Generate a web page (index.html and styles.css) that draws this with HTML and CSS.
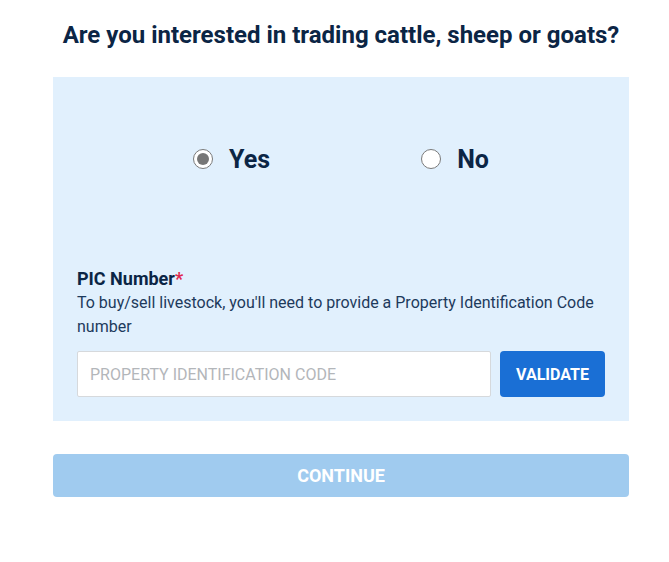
FILE: index.html
```html
<!doctype html>
<html>
<head>
<meta charset="UTF-8">
<title>Livestock trading</title>
<link rel="stylesheet" href="styles.css">
</head>
<body>
  <div class="wrap">
    <h1 class="title">Are you interested in trading cattle, sheep or goats?</h1>
    <div class="panel">
      <div class="choices">
        <label class="choice"><span class="radio checked"></span>Yes</label>
        <label class="choice"><span class="radio"></span>No</label>
      </div>
      <div class="field">
        <div class="field-label">PIC Number<span class="req">*</span></div>
        <p class="field-help">To buy/sell livestock, you'll need to provide a Property Identification Code number</p>
        <div class="field-row">
          <input class="pic-input" type="text" placeholder="PROPERTY IDENTIFICATION CODE">
          <button class="btn-validate">VALIDATE</button>
        </div>
      </div>
    </div>
    <button class="btn-continue">CONTINUE</button>
  </div>
</body>
</html>
```

FILE: styles.css
```css
body {
  margin: 0;
  background: #fff;
  font-family: Roboto, "Liberation Sans", sans-serif;
  color: #0b2545;
}
.wrap {
  width: 576px;
  margin-left: 53px;
  padding-top: 20px;
}
.title {
  margin: 0 0 27px;
  font-size: 24px;
  line-height: 30px;
  font-weight: 700;
  text-align: center;
  color: #0b2545;
}
/* blue box */
.panel {
  background-color: #e1f0fd;
  padding: 24px;
}
.choices {
  display: flex;
  justify-content: center;
  gap: 151px;
  height: 116px;
  align-items: center;
  margin-bottom: 50px;
}
.choice {
  display: flex;
  align-items: center;
  gap: 16px;
  font-size: 25px;
  font-weight: 700;
  color: #0b2545;
}
.radio {
  width: 18px;
  height: 18px;
  border: 1px solid #7a7a7a;
  border-radius: 50%;
  background: #fff;
  position: relative;
}
.radio.checked:after {
  content: '';
  position: absolute;
  top: 3px;
  left: 3px;
  width: 12px;
  height: 12px;
  border-radius: 50%;
  background: #767676;
}
.field-label {
  font-size: 18px;
  font-weight: 700;
  line-height: 24px;
  color: #0b2545;
}
.req {
  color: #e0284f;
}
.field-help {
  margin: 0 0 12px;
  font-size: 16px;
  line-height: 24px;
  color: #1d3a5c;
}
.field-row {
  display: flex;
  gap: 9px;
}
.pic-input {
  flex: 1;
  height: 46px;
  box-sizing: border-box;
  border: 1px solid #d6d9dc;
  border-radius: 2px;
  padding: 0 12px;
  font-family: Roboto, sans-serif;
  font-size: 16px;
  background: #fff;
}
.pic-input::placeholder {
  color: #b3b6ba;
}
.btn-validate {
  width: 105px;
  height: 46px;
  border: 0;
  border-radius: 4px;
  background: #1a6fd5;
  color: #fff;
  font-family: Roboto, sans-serif;
  font-size: 16px;
  font-weight: 700;
}
.btn-continue {
  display: block;
  width: 100%;
  height: 43px;
  margin-top: 33px;
  border: 0;
  border-radius: 4px;
  background: #a0cbef;
  color: #fff;
  font-family: Roboto, sans-serif;
  font-size: 18px;
  font-weight: 700;
}
```
